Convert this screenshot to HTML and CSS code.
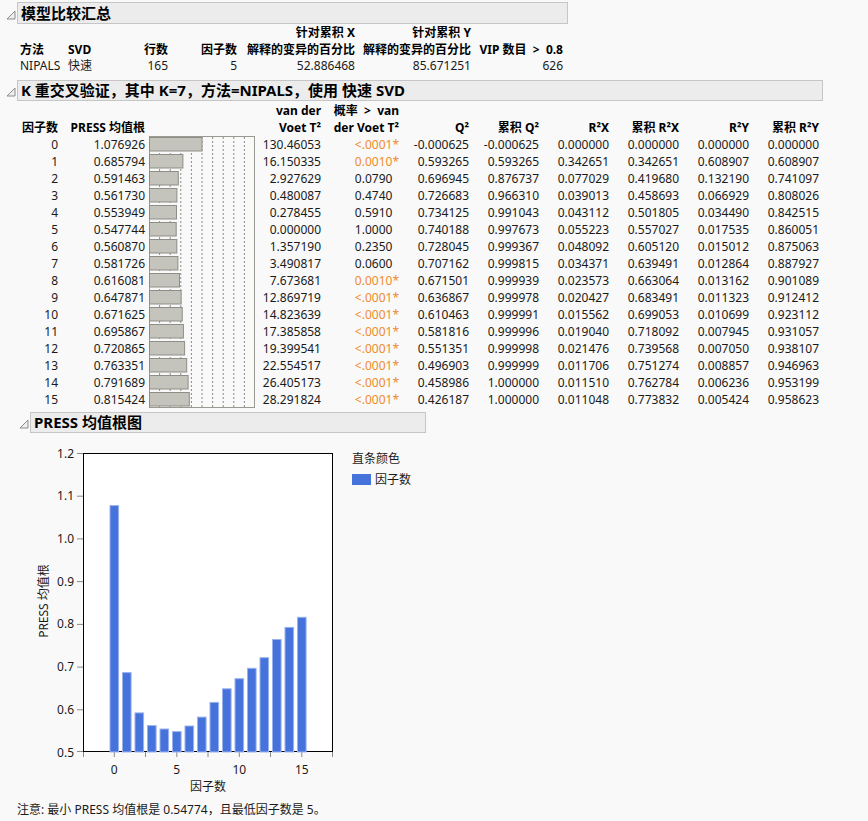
FILE: index.html
```html
<!DOCTYPE html>
<html lang="zh">
<head>
<meta charset="utf-8">
<title>模型比较汇总</title>
<link rel="stylesheet" href="styles.css">
</head>
<body>
<div class="page">
  <div class="ohead h1">
    <svg class="tri" viewBox="0 0 10 10"><polygon points="1,9 9,9 9,1" /></svg>
    <div class="otitle w1">模型比较汇总</div>
  </div>
  <div class="t1">
    <div></div><div></div><div></div><div></div><div class="b">针对累积 X</div><div class="b">针对累积 Y</div><div></div>
    <div class="b l">方法</div><div class="b l">SVD</div><div class="b">行数</div><div class="b">因子数</div><div class="b">解释的变异的百分比</div><div class="b">解释的变异的百分比</div><div class="b">VIP 数目 &nbsp;&gt; &nbsp;0.8</div>
    <div class="l">NIPALS</div><div class="l">快速</div><div>165</div><div>5</div><div>52.886468</div><div>85.671251</div><div>626</div>
  </div>

  <div class="ohead h2">
    <svg class="tri" viewBox="0 0 10 10"><polygon points="1,9 9,9 9,1" /></svg>
    <div class="otitle w2">K 重交叉验证，其中 K=7，方法=NIPALS，使用 快速 SVD</div>
  </div>
  <div class="t2head">
    <div>因子数</div><div>PRESS 均值根</div><div></div><div>van der<br>Voet T²</div><div>概率 &nbsp;&gt; &nbsp;van<br>der Voet T²</div><div>Q²</div><div>累积 Q²</div><div>R²X</div><div>累积 R²X</div><div>R²Y</div><div>累积 R²Y</div>
  </div>
  <div class="t2">
    <svg class="barcol" width="114" height="272" viewBox="0 0 114 272">
      <rect class="box" x="4.5" y="0.5" width="105" height="271"/>
      <g class="dots">
        <line x1="14.6" y1="1" x2="14.6" y2="271"/><line x1="25.2" y1="1" x2="25.2" y2="271"/><line x1="35.8" y1="1" x2="35.8" y2="271"/><line x1="46.4" y1="1" x2="46.4" y2="271"/><line x1="57" y1="1" x2="57" y2="271"/><line x1="67.6" y1="1" x2="67.6" y2="271"/><line x1="78.2" y1="1" x2="78.2" y2="271"/><line x1="88.8" y1="1" x2="88.8" y2="271"/><line x1="99.4" y1="1" x2="99.4" y2="271"/>
      </g>
      <g class="hbars">
        <rect x="4.5" y="1.5" width="52.5" height="13.5"/>
        <rect x="4.5" y="18.5" width="33.4" height="13.5"/>
        <rect x="4.5" y="35.5" width="28.8" height="13.5"/>
        <rect x="4.5" y="52.5" width="27.4" height="13.5"/>
        <rect x="4.5" y="69.5" width="27.0" height="13.5"/>
        <rect x="4.5" y="86.5" width="26.7" height="13.5"/>
        <rect x="4.5" y="103.5" width="27.3" height="13.5"/>
        <rect x="4.5" y="120.5" width="28.4" height="13.5"/>
        <rect x="4.5" y="137.5" width="30.0" height="13.5"/>
        <rect x="4.5" y="154.5" width="31.6" height="13.5"/>
        <rect x="4.5" y="171.5" width="32.7" height="13.5"/>
        <rect x="4.5" y="188.5" width="33.9" height="13.5"/>
        <rect x="4.5" y="205.5" width="35.1" height="13.5"/>
        <rect x="4.5" y="222.5" width="37.2" height="13.5"/>
        <rect x="4.5" y="239.5" width="38.6" height="13.5"/>
        <rect x="4.5" y="256.5" width="39.8" height="13.5"/>
      </g>
    </svg>
    <div>0</div><div>1.076926</div><div>130.46053</div><div class="or">&lt;.0001*</div><div>-0.000625</div><div>-0.000625</div><div>0.000000</div><div>0.000000</div><div>0.000000</div><div>0.000000</div>
    <div>1</div><div>0.685794</div><div>16.150335</div><div class="or">0.0010*</div><div>0.593265</div><div>0.593265</div><div>0.342651</div><div>0.342651</div><div>0.608907</div><div>0.608907</div>
    <div>2</div><div>0.591463</div><div>2.927629</div><div>0.0790<span class="hid">*</span></div><div>0.696945</div><div>0.876737</div><div>0.077029</div><div>0.419680</div><div>0.132190</div><div>0.741097</div>
    <div>3</div><div>0.561730</div><div>0.480087</div><div>0.4740<span class="hid">*</span></div><div>0.726683</div><div>0.966310</div><div>0.039013</div><div>0.458693</div><div>0.066929</div><div>0.808026</div>
    <div>4</div><div>0.553949</div><div>0.278455</div><div>0.5910<span class="hid">*</span></div><div>0.734125</div><div>0.991043</div><div>0.043112</div><div>0.501805</div><div>0.034490</div><div>0.842515</div>
    <div>5</div><div>0.547744</div><div>0.000000</div><div>1.0000<span class="hid">*</span></div><div>0.740188</div><div>0.997673</div><div>0.055223</div><div>0.557027</div><div>0.017535</div><div>0.860051</div>
    <div>6</div><div>0.560870</div><div>1.357190</div><div>0.2350<span class="hid">*</span></div><div>0.728045</div><div>0.999367</div><div>0.048092</div><div>0.605120</div><div>0.015012</div><div>0.875063</div>
    <div>7</div><div>0.581726</div><div>3.490817</div><div>0.0600<span class="hid">*</span></div><div>0.707162</div><div>0.999815</div><div>0.034371</div><div>0.639491</div><div>0.012864</div><div>0.887927</div>
    <div>8</div><div>0.616081</div><div>7.673681</div><div class="or">0.0010*</div><div>0.671501</div><div>0.999939</div><div>0.023573</div><div>0.663064</div><div>0.013162</div><div>0.901089</div>
    <div>9</div><div>0.647871</div><div>12.869719</div><div class="or">&lt;.0001*</div><div>0.636867</div><div>0.999978</div><div>0.020427</div><div>0.683491</div><div>0.011323</div><div>0.912412</div>
    <div>10</div><div>0.671625</div><div>14.823639</div><div class="or">&lt;.0001*</div><div>0.610463</div><div>0.999991</div><div>0.015562</div><div>0.699053</div><div>0.010699</div><div>0.923112</div>
    <div>11</div><div>0.695867</div><div>17.385858</div><div class="or">&lt;.0001*</div><div>0.581816</div><div>0.999996</div><div>0.019040</div><div>0.718092</div><div>0.007945</div><div>0.931057</div>
    <div>12</div><div>0.720865</div><div>19.399541</div><div class="or">&lt;.0001*</div><div>0.551351</div><div>0.999998</div><div>0.021476</div><div>0.739568</div><div>0.007050</div><div>0.938107</div>
    <div>13</div><div>0.763351</div><div>22.554517</div><div class="or">&lt;.0001*</div><div>0.496903</div><div>0.999999</div><div>0.011706</div><div>0.751274</div><div>0.008857</div><div>0.946963</div>
    <div>14</div><div>0.791689</div><div>26.405173</div><div class="or">&lt;.0001*</div><div>0.458986</div><div>1.000000</div><div>0.011510</div><div>0.762784</div><div>0.006236</div><div>0.953199</div>
    <div>15</div><div>0.815424</div><div>28.291824</div><div class="or">&lt;.0001*</div><div>0.426187</div><div>1.000000</div><div>0.011048</div><div>0.773832</div><div>0.005424</div><div>0.958623</div>
  </div>

  <div class="ohead h3">
    <svg class="tri" viewBox="0 0 10 10"><polygon points="1,9 9,9 9,1" /></svg>
    <div class="otitle w3">PRESS 均值根图</div>
  </div>
  <div class="chartrow">
    <svg class="chart" width="345" height="360" viewBox="0 436 345 360">
      <rect class="frame" x="83.5" y="453.5" width="249" height="298"/>
      <g class="ticks">
        <line x1="77" y1="453.5" x2="83" y2="453.5"/>
        <line x1="77" y1="496.2" x2="83" y2="496.2"/>
        <line x1="77" y1="538.9" x2="83" y2="538.9"/>
        <line x1="77" y1="581.6" x2="83" y2="581.6"/>
        <line x1="77" y1="624.4" x2="83" y2="624.4"/>
        <line x1="77" y1="667.1" x2="83" y2="667.1"/>
        <line x1="77" y1="709.8" x2="83" y2="709.8"/>
        <line x1="77" y1="751.5" x2="83" y2="751.5"/>
        <line x1="83.5" y1="752" x2="83.5" y2="757"/>
        <line x1="114.3" y1="752" x2="114.3" y2="757"/>
        <line x1="145.5" y1="752" x2="145.5" y2="757"/>
        <line x1="176.8" y1="752" x2="176.8" y2="757"/>
        <line x1="208" y1="752" x2="208" y2="757"/>
        <line x1="239.3" y1="752" x2="239.3" y2="757"/>
        <line x1="270.5" y1="752" x2="270.5" y2="757"/>
        <line x1="301.8" y1="752" x2="301.8" y2="757"/>
        <line x1="332.5" y1="752" x2="332.5" y2="757"/>
      </g>
      <g class="ylab">
        <text x="74" y="453">1.2</text>
        <text x="74" y="495.7">1.1</text>
        <text x="74" y="538.4">1.0</text>
        <text x="74" y="581.1">0.9</text>
        <text x="74" y="623.9">0.8</text>
        <text x="74" y="666.6">0.7</text>
        <text x="74" y="709.3">0.6</text>
        <text x="74" y="752">0.5</text>
      </g>
      <g class="xlab">
        <text x="114.3" y="769">0</text>
        <text x="176.8" y="769">5</text>
        <text x="239.3" y="769">10</text>
        <text x="301.8" y="769">15</text>
      </g>
      <text class="axtitle" x="208" y="786">因子数</text>
      <text class="axtitle" x="43" y="601" transform="rotate(-90 43 601)">PRESS 均值根</text>
      <g class="vbars">
        <rect x="110" y="505.6" width="8.6" height="246.4"/>
        <rect x="122.5" y="672.6" width="8.6" height="79.4"/>
        <rect x="135" y="712.9" width="8.6" height="39.1"/>
        <rect x="147.5" y="725.6" width="8.6" height="26.4"/>
        <rect x="160" y="729" width="8.6" height="23"/>
        <rect x="172.5" y="731.6" width="8.6" height="20.4"/>
        <rect x="185" y="726" width="8.6" height="26"/>
        <rect x="197.5" y="717.1" width="8.6" height="34.9"/>
        <rect x="210" y="702.4" width="8.6" height="49.6"/>
        <rect x="222.5" y="688.8" width="8.6" height="63.2"/>
        <rect x="235" y="678.7" width="8.6" height="73.3"/>
        <rect x="247.5" y="668.3" width="8.6" height="83.7"/>
        <rect x="260" y="657.7" width="8.6" height="94.3"/>
        <rect x="272.5" y="639.5" width="8.6" height="112.5"/>
        <rect x="285" y="627.4" width="8.6" height="124.6"/>
        <rect x="297.5" y="617.3" width="8.6" height="134.7"/>
      </g>
    </svg>
    <div class="legend">
      <div class="lgtitle">直条颜色</div>
      <div class="lgitem"><span class="swatch"></span><span>因子数</span></div>
    </div>
  </div>
  <div class="note">注意: 最小 PRESS 均值根是 0.54774，且最低因子数是 5。</div>
</div>
</body>
</html>
```
FILE: styles.css
```css
html, body {
  margin: 0;
  padding: 0;
}
body {
  background: #f9f9f9;
  font-family: "Noto Sans", "Noto Sans CJK SC", sans-serif;
  font-size: 12px;
  color: #1a1a1a;
  width: 868px;
  height: 821px;
  overflow: hidden;
}
.page {
  padding-top: 2px;
}

/* outline headers */
.ohead {
  display: flex;
  align-items: center;
}
.h1, .h2 {
  margin-left: 6px;
}
.h2 {
  margin-top: 5px;
}
.h3 {
  margin-left: 19px;
  margin-top: 4px;
}
.tri {
  width: 10px;
  height: 10px;
  margin-right: 1px;
  margin-top: 3px;
}
.tri polygon {
  fill: #eeeeee;
  stroke: #8c8c8c;
  stroke-width: 1;
}
.otitle {
  box-sizing: border-box;
  height: 22px;
  border: 1px solid #c6c6c6;
  background: #ececec;
  font-weight: bold;
  font-size: 15px;
  line-height: 20px;
  padding-left: 3px;
  color: #000;
  white-space: nowrap;
}
.w1 { width: 551px; }
.w2 { width: 806px; height: 21px; line-height: 19px; }
.w3 { width: 396px; height: 21px; line-height: 19px; }

/* table 1 */
.t1 {
  display: grid;
  grid-template-columns: 48px 40px 60px 69px 118px 116px 92px;
  margin-left: 20px;
  margin-top: 1px;
  line-height: 16.5px;
}
.t1 > div {
  text-align: right;
  white-space: nowrap;
}
.t1 > div.l {
  text-align: left;
}
.b {
  font-weight: bold;
  color: #000;
}

/* table 2 */
.t2head, .t2 {
  display: grid;
  grid-template-columns: 38px 87px 114px 62px 78px repeat(6, 70px);
  margin-left: 20px;
}
.t2head {
  margin-top: 1px;
  height: 34px;
}
.t2head > div {
  display: flex;
  flex-direction: column;
  justify-content: flex-end;
  align-items: flex-end;
  text-align: right;
  font-weight: bold;
  color: #000;
  line-height: 17px;
  white-space: nowrap;
}
.t2 {
  grid-auto-rows: 17px;
}
.t2 > div {
  text-align: right;
  line-height: 17px;
  white-space: nowrap;
}
.barcol {
  grid-column: 3;
  grid-row: 1 / span 16;
  display: block;
}
.box {
  fill: none;
  stroke: #9a9a92;
  stroke-width: 1;
}
.dots line {
  stroke: #8a8a8a;
  stroke-width: 1;
  stroke-dasharray: 2 2;
}
.hbars rect {
  fill: #c4c4bc;
  stroke: #8e8e86;
  stroke-width: 1;
}
.or {
  color: #ef8b2c;
}
.hid {
  visibility: hidden;
}

/* chart */
.chartrow {
  display: flex;
  margin-top: 3px;
}
.chart {
  display: block;
}
.frame {
  fill: #ffffff;
  stroke: #000;
  stroke-width: 1;
}
.ticks line {
  stroke: #8a8a8a;
  stroke-width: 1;
}
.ylab text {
  font-family: "Noto Sans", "Noto Sans CJK SC", sans-serif;
  font-size: 12px;
  fill: #1a1a1a;
  text-anchor: end;
  dominant-baseline: central;
}
.xlab text {
  font-family: "Noto Sans", "Noto Sans CJK SC", sans-serif;
  font-size: 12px;
  fill: #1a1a1a;
  text-anchor: middle;
  dominant-baseline: central;
}
.axtitle {
  font-family: "Noto Sans", "Noto Sans CJK SC", sans-serif;
  font-size: 12px;
  fill: #1a1a1a;
  text-anchor: middle;
  dominant-baseline: central;
}
.vbars rect {
  fill: #4672dc;
  stroke: #9ab2ee;
  stroke-width: 1;
}
.legend {
  margin-left: 7px;
  padding-top: 15px;
}
.lgtitle {
  line-height: 16px;
}
.lgitem {
  display: flex;
  align-items: center;
  margin-top: 5px;
  line-height: 16px;
}
.swatch {
  display: inline-block;
  width: 19px;
  height: 11px;
  background: #4672dc;
  margin-right: 4px;
}
.note {
  margin-left: 17px;
  margin-top: 6px;
  line-height: 16px;
}
```
